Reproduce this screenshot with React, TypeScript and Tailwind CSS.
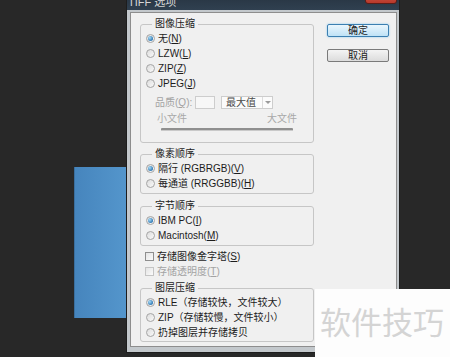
import React from "react";

type OptionProps = {
  label: React.ReactNode;
  checked?: boolean;
  disabled?: boolean;
};

function Key({ k }: { k: string }) {
  return <span className="underline underline-offset-[1px]">{k}</span>;
}

function Radio({ label, checked, disabled }: OptionProps) {
  return (
    <div className="flex items-center h-[15px] gap-[3px]">
      <span className="w-[9px] h-[9px] shrink-0 rounded-full border border-[#a4a4a4] bg-linear-to-br from-[#dcdcdc] to-[#fafafa] flex items-center justify-center">
        {checked && (
          <span className="w-[5px] h-[5px] rounded-full bg-[radial-gradient(circle_at_35%_35%,#a8dcf8,#2a74b0_75%)]" />
        )}
      </span>
      <span className={disabled ? "text-[#a0a0a0]" : "text-[#1c1c1c]"}>{label}</span>
    </div>
  );
}

function Checkbox({ label, disabled }: OptionProps) {
  return (
    <div className="flex items-center h-[15px] gap-[3px] ml-[5px]">
      <span
        className={`w-[9px] h-[9px] shrink-0 border bg-linear-to-br from-[#e4e4e4] to-[#fbfbfb] ${
          disabled ? "border-[#c4c4c4]" : "border-[#8e8e8e]"
        }`}
      />
      <span className={disabled ? "text-[#a3a3a3]" : "text-[#1c1c1c]"}>{label}</span>
    </div>
  );
}

function Group({
  title,
  className,
  children,
}: {
  title: string;
  className?: string;
  children: React.ReactNode;
}) {
  return (
    <fieldset className={`border border-[#c6c6c6] rounded-[3px] px-[5px] ${className ?? ""}`}>
      <legend className="ml-[6px] px-[3px] leading-[12px] text-[#1c1c1c]">{title}</legend>
      {children}
    </fieldset>
  );
}

function TiffDialog() {
  return (
    <div className="absolute left-[126px] top-[-14px] w-[274px] h-[367px] border border-[#1d1d1d] bg-[#c3c8cc] flex flex-col">
      <div className="h-[23px] bg-linear-to-b from-[#222e3a] to-[#304050] flex items-start justify-between">
        <span className="self-end mb-[2px] ml-[1px] text-[11px] leading-[12px] text-[#d6d6d6]">
          TIFF 选项
        </span>
        <span className="w-[32px] h-[17px] mr-[2px] rounded-b-[3px] border border-[#5a1d18] bg-linear-to-b from-[#d86a5c] to-[#b8382a]" />
      </div>

      <div className="flex-1 mt-[2px] ml-[3px] mr-[2px] mb-[5px] border border-[#8d8d8d] bg-[#f0f0f0] flex pl-[9px] pt-[5px]">
        <div className="w-[174px] flex flex-col">
          <Group title="图像压缩" className="pt-[1px] pb-[11px]">
            <Radio label={<>无(<Key k="N" />)</>} checked />
            <Radio label={<>LZW(<Key k="L" />)</>} />
            <Radio label={<>ZIP(<Key k="Z" />)</>} />
            <Radio label={<>JPEG(<Key k="J" />)</>} />
            <div className="mt-[5px] h-[13px] flex items-center ml-[9px]">
              <span className="w-[40px] text-[#a3a3a3]">
                品质(<Key k="Q" />):
              </span>
              <span className="w-[20px] h-[13px] border border-[#cdcdcd] bg-[#f7f7f7]" />
              <span className="ml-[6px] w-[52px] h-[13px] border border-[#cdcdcd] bg-[#fbfbfb] flex items-center">
                <span className="flex-1 pl-[4px] leading-[11px] text-[#4a4a4a]">最大值</span>
                <span className="w-[10px] h-full border-l border-[#dcdcdc] flex items-center justify-center">
                  <span className="w-0 h-0 border-x-[3px] border-x-transparent border-t-[3px] border-t-[#9a9a9a]" />
                </span>
              </span>
            </div>
            <div className="mt-[4px] h-[12px] flex justify-between px-[11px] leading-[12px] text-[#a8a8a8]">
              <span>小文件</span>
              <span>大文件</span>
            </div>
            <div className="mt-[3px] mx-[15px] h-[3px] rounded-[1px] bg-[#8f8f8f] border-b border-[#c9c9c9]" />
          </Group>

          <Group title="像素顺序" className="mt-[5px] pt-[1px] pb-[2px]">
            <Radio label={<>隔行 (RGBRGB)(<Key k="V" />)</>} checked />
            <Radio label={<>每通道 (RRGGBB)(<Key k="H" />)</>} />
          </Group>

          <Group title="字节顺序" className="mt-[6px] pt-[1px] pb-[2px]">
            <Radio label={<>IBM PC(<Key k="I" />)</>} checked />
            <Radio label={<>Macintosh(<Key k="M" />)</>} />
          </Group>

          <div className="mt-[3px]">
            <Checkbox label={<>存储图像金字塔(<Key k="S" />)</>} />
            <Checkbox label={<>存储透明度(<Key k="T" />)</>} disabled />
          </div>

          <Group title="图层压缩" className="mt-[3px] pt-[1px] pb-[1px]">
            <Radio label="RLE（存储较快，文件较大）" checked />
            <Radio label="ZIP（存储较慢，文件较小）" />
            <Radio label="扔掉图层并存储拷贝" />
          </Group>
        </div>

        <div className="ml-[13px] w-[62px] pt-[6px] flex flex-col">
          <button className="h-[13px] rounded-[2px] border border-[#3c7fb1] bg-linear-to-b from-[#eaf6fd] to-[#bfe2f6] shadow-[0_0_2px_#7cc4ef] leading-[11px] text-[#1c1c1c]">
            确定
          </button>
          <button className="mt-[12px] h-[13px] rounded-[2px] border border-[#7a7a7a] bg-linear-to-b from-[#f4f4f4] to-[#dcdcdc] leading-[11px] text-[#1c1c1c]">
            取消
          </button>
        </div>
      </div>
    </div>
  );
}

export default function App() {
  return (
    <div className="relative w-[450px] h-[357px] overflow-hidden bg-[#282828] text-[10px] leading-[15px] font-['Liberation_Sans','Noto_Sans_CJK_SC',sans-serif]">
      <div className="absolute left-[74px] top-[167px] w-[56px] h-[151px] bg-linear-to-r from-[#4685bd] to-[#5597cd] border-l border-[#3a6f9e]" />

      <TiffDialog />

      <div className="absolute left-[315px] top-[289px] w-[135px] h-[68px] bg-[#fdfdfd] pl-[5px] pt-[15px]">
        <span className="text-[31px] leading-[34px] text-[#d4d4d4] font-['Noto_Sans_CJK_SC',sans-serif]">
          软件技巧
        </span>
      </div>
    </div>
  );
}
